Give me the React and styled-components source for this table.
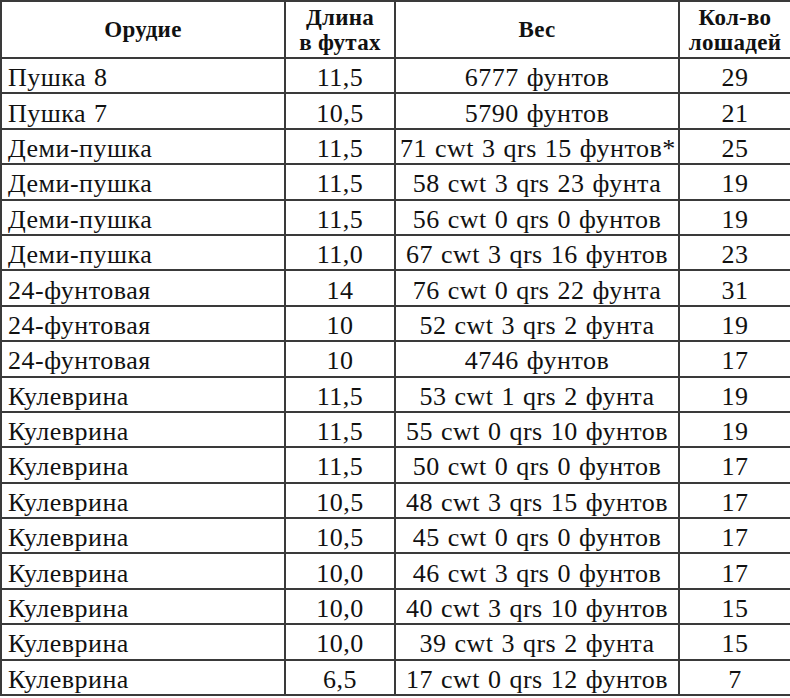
import React from 'react';
import styled, { createGlobalStyle } from 'styled-components';

const GlobalStyle = createGlobalStyle`
  html, body {
    margin: 0;
    padding: 0;
    background: #ffffff;
    font-family: 'Liberation Serif', 'Times New Roman', serif;
  }
`;

const Page = styled.div`
  width: 790px;
  height: 698px;
  overflow: hidden;
  background: #ffffff;
`;

const Table = styled.table`
  width: 790px;
  border-collapse: collapse;
  table-layout: fixed;
  color: #111;
  border: 2px solid #3a3a3a;
`;

const HeadCell = styled.th`
  height: 55px;
  padding: 0 4px;
  border: 2px solid #3a3a3a;
  font-family: 'Liberation Serif', 'Times New Roman', serif;
  font-size: 23px;
  line-height: 25px;
  letter-spacing: 0.3px;
  font-weight: bold;
  text-align: center;
  vertical-align: middle;
`;

const Cell = styled.td`
  height: 28.4px;
  padding: 5px ${(p) => (p.left ? '6px' : '4px')} 0;
  border: 2px solid #3a3a3a;
  font-family: 'Liberation Serif', 'Times New Roman', serif;
  font-size: 26px;
  line-height: 28px;
  letter-spacing: 0.5px;
  word-spacing: 1px;
  text-align: ${(p) => (p.left ? 'left' : 'center')};
  vertical-align: middle;
  white-space: nowrap;
`;

const rows = [
  ['Пушка 8', '11,5', '6777 фунтов', '29'],
  ['Пушка 7', '10,5', '5790 фунтов', '21'],
  ['Деми-пушка', '11,5', '71 cwt 3 qrs 15 фунтов*', '25'],
  ['Деми-пушка', '11,5', '58 cwt 3 qrs 23 фунта', '19'],
  ['Деми-пушка', '11,5', '56 cwt 0 qrs 0 фунтов', '19'],
  ['Деми-пушка', '11,0', '67 cwt 3 qrs 16 фунтов', '23'],
  ['24-фунтовая', '14', '76 cwt 0 qrs 22 фунта', '31'],
  ['24-фунтовая', '10', '52 cwt 3 qrs 2 фунта', '19'],
  ['24-фунтовая', '10', '4746 фунтов', '17'],
  ['Кулеврина', '11,5', '53 cwt 1 qrs 2 фунта', '19'],
  ['Кулеврина', '11,5', '55 cwt 0 qrs 10 фунтов', '19'],
  ['Кулеврина', '11,5', '50 cwt 0 qrs 0 фунтов', '17'],
  ['Кулеврина', '10,5', '48 cwt 3 qrs 15 фунтов', '17'],
  ['Кулеврина', '10,5', '45 cwt 0 qrs 0 фунтов', '17'],
  ['Кулеврина', '10,0', '46 cwt 3 qrs 0 фунтов', '17'],
  ['Кулеврина', '10,0', '40 cwt 3 qrs 10 фунтов', '15'],
  ['Кулеврина', '10,0', '39 cwt 3 qrs 2 фунта', '15'],
  ['Кулеврина', '6,5', '17 cwt 0 qrs 12 фунтов', '7'],
];

export default function App() {
  return (
    <Page>
      <GlobalStyle />
      <Table>
        <colgroup>
          <col style={{ width: 284 }} />
          <col style={{ width: 110 }} />
          <col style={{ width: 284 }} />
          <col style={{ width: 112 }} />
        </colgroup>
        <thead>
          <tr>
            <HeadCell>Орудие</HeadCell>
            <HeadCell>Длина<br />в футах</HeadCell>
            <HeadCell>Вес</HeadCell>
            <HeadCell>Кол-во<br />лошадей</HeadCell>
          </tr>
        </thead>
        <tbody>
          {rows.map((r, i) => (
            <tr key={i}>
              <Cell left>{r[0]}</Cell>
              <Cell>{r[1]}</Cell>
              <Cell>{r[2]}</Cell>
              <Cell>{r[3]}</Cell>
            </tr>
          ))}
        </tbody>
      </Table>
    </Page>
  );
}
